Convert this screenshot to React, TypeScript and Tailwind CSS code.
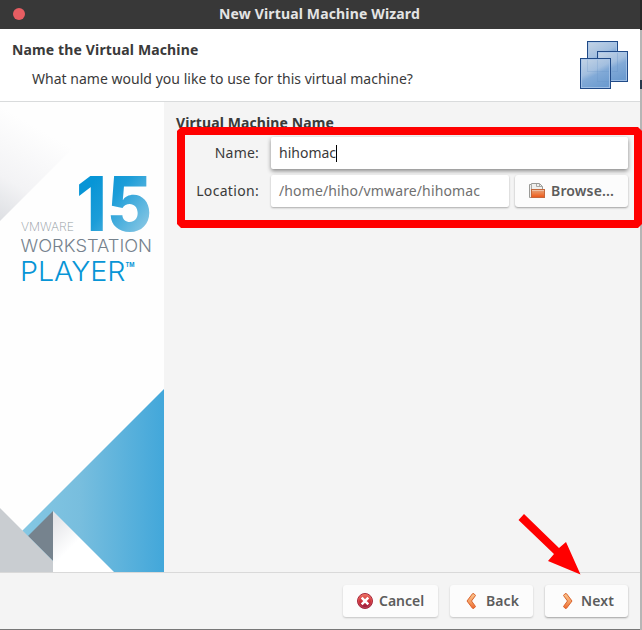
import React from 'react';

const FONT = "font-['Noto_Sans','Open_Sans',sans-serif]";

function SplashArt() {
  return (
    <svg className="block h-[470px] w-[164px]" viewBox="0 102 164 470">
      <defs>
        <linearGradient id="haze" gradientUnits="userSpaceOnUse" x1="0" y1="221" x2="50" y2="135">
          <stop offset="0" stopColor="#dddfe3" />
          <stop offset="0.4" stopColor="#f3f3f5" />
          <stop offset="1" stopColor="#fefefe" />
        </linearGradient>
        <linearGradient id="blue" gradientUnits="userSpaceOnUse" x1="24" y1="0" x2="164" y2="0">
          <stop offset="0" stopColor="#84c7e3" />
          <stop offset="0.4" stopColor="#78bede" />
          <stop offset="1" stopColor="#42a7da" />
        </linearGradient>
        <linearGradient id="fold" gradientUnits="userSpaceOnUse" x1="53" y1="520" x2="76" y2="543">
          <stop offset="0" stopColor="#e4e5e8" />
          <stop offset="1" stopColor="#ffffff" />
        </linearGradient>
        <linearGradient id="digits" gradientUnits="userSpaceOnUse" x1="90" y1="185" x2="150" y2="232">
          <stop offset="0" stopColor="#0795d6" />
          <stop offset="0.35" stopColor="#1c9dd8" />
          <stop offset="1" stopColor="#93cbe5" />
        </linearGradient>
      </defs>
      <rect x="0" y="102" width="164" height="470" fill="#fefefe" />
      <path d="M0 102H119L0 221Z" fill="url(#haze)" />
      <path d="M164 389V572H60L22 531Z" fill="url(#blue)" />
      <path d="M53 511L28 536L53 561Z" fill="#76838e" />
      <path d="M53 511V572H114Z" fill="url(#fold)" />
      <path d="M0 508L53 561V572H0Z" fill="#c9cdd1" />
      <text x="76" y="230.500" textLength="76" lengthAdjust="spacingAndGlyphs" fill="url(#digits)" fontFamily="Inter, sans-serif" fontSize="75" fontWeight="800">15</text>
      <text x="21" y="231" textLength="53" lengthAdjust="spacingAndGlyphs" fill="#929ba3" fontFamily="Inter, sans-serif" fontSize="12" fontWeight="200">VMWARE</text>
      <text x="20.500" y="252" textLength="131.500" lengthAdjust="spacingAndGlyphs" fill="#75828d" fontFamily="Inter, sans-serif" fontSize="17.5" fontWeight="300">WORKSTATION</text>
      <text x="20" y="280.500" textLength="105.500" lengthAdjust="spacingAndGlyphs" fill="#0795d6" fontFamily="Inter, sans-serif" fontSize="26.500" fontWeight="300">PLAYER</text>
      <text x="125.500" y="267" textLength="9" lengthAdjust="spacingAndGlyphs" fill="#0795d6" fontFamily="Inter, sans-serif" fontSize="6.500" fontWeight="700">TM</text>
    </svg>
  );
}

function MachinesIcon() {
  return (
    <svg className="h-[48px] w-[48px]" viewBox="0 0 48 48">
      <defs>
        <linearGradient id="pane" x1="0.1" y1="0" x2="0.6" y2="1">
          <stop offset="0" stopColor="#c3d3e5" />
          <stop offset="0.45" stopColor="#a3bfdf" />
          <stop offset="0.6" stopColor="#82aad7" />
          <stop offset="1" stopColor="#6d9cd0" />
        </linearGradient>
      </defs>
      {[[7, 0], [17, 10], [0, 17]].map(([x, y]) => (
        <g key={x}>
          <rect x={x + 0.5} y={y + 0.5} width="30" height="30" fill="url(#pane)" stroke="#204a87" />
          <rect x={x + 1.5} y={y + 1.5} width="28" height="28" fill="none" stroke="#a9c6e8" strokeOpacity="0.8" />
        </g>
      ))}
      <path d="M7.500 19V30.500H29M17.500 19V40.500H29" fill="none" stroke="#5f8fc6" strokeOpacity="0.22" />
      <path d="M32 30.500H37.500V12" fill="none" stroke="#5f8fc6" strokeOpacity="0.3" />
    </svg>
  );
}

function FolderIcon() {
  return (
    <svg className="h-4 w-4 shrink-0" viewBox="0 0 16 16">
      <defs>
        <linearGradient id="folder" x1="0" y1="0" x2="0" y2="1">
          <stop offset="0" stopColor="#e3a582" />
          <stop offset="0.5" stopColor="#ec8149" />
          <stop offset="1" stopColor="#ec5518" />
        </linearGradient>
      </defs>
      <path d="M.5 14.500V1.500H2.500V.5H10.500L13.500 3.500V7H3V14.500Z" fill="#efefed" stroke="#9a9a97" />
      <path d="M2.500 2V13M7.500 1V3.500H13.500M10.500 1V3" fill="none" stroke="#a9a9a6" />
      <rect x="2.500" y="6.500" width="13" height="8" fill="url(#folder)" stroke="#c4683c" />
      <path d="M3 7.500H15" stroke="#edc0a4" />
    </svg>
  );
}

function CancelIcon() {
  return (
    <svg className="h-4 w-4 shrink-0" viewBox="0 0 16 16">
      <defs>
        <linearGradient id="stop" x1="0" y1="0" x2="0" y2="1">
          <stop offset="0" stopColor="#ef7a68" />
          <stop offset="0.5" stopColor="#cf3038" />
          <stop offset="1" stopColor="#8f1840" />
        </linearGradient>
      </defs>
      <circle cx="8" cy="8" r="7.500" fill="url(#stop)" stroke="#a6283d" />
      <circle cx="8" cy="8" r="6.500" fill="none" stroke="#ee7770" strokeOpacity="0.4" />
      <path d="M4.700 4.700L11.300 11.300M11.300 4.700L4.700 11.300" stroke="#fff" strokeWidth="2.500" />
    </svg>
  );
}

function Chevron({ flip = false }: { flip?: boolean }) {
  return (
    <svg className={flip ? 'h-4 w-4 shrink-0 -scale-x-100' : 'h-4 w-4 shrink-0'} viewBox="0 0 16 16">
      <defs>
        <linearGradient id="chev" x1="0" y1="0" x2="0" y2="1">
          <stop offset="0" stopColor="#fbc58d" />
          <stop offset="0.6" stopColor="#f49a5e" />
          <stop offset="1" stopColor="#ee6a2f" />
        </linearGradient>
      </defs>
      <path d="M4.500 2.500L6 .7H7.500L13 8L7.500 15.300H6L4.500 13.500L8.500 8Z" fill="url(#chev)" stroke="#d9622c" strokeLinejoin="round" />
    </svg>
  );
}

const BTN = 'flex items-center rounded-[3px] bg-[#fcfcfc] font-semibold text-[#5c5c5c]';
const BTN_RAISED = 'shadow-[0_1px_2px_rgba(0,0,0,0.35)]';
const BTN_FLAT = 'shadow-[0_1px_2px_rgba(0,0,0,0.2)]';

export default function App() {
  return (
    <div className={`relative flex h-[630px] w-[642px] overflow-hidden text-[14px] leading-[20px] whitespace-nowrap text-[#3a3a3a] ${FONT}`}>
      <div className="flex w-[640px] flex-col border-b border-[#777777] bg-[#f4f4f4]">
        <header className="flex h-[29px] items-center bg-[#383838] pb-px">
          <div className="ml-[13px] h-[12px] w-[12px] rounded-full bg-[#e75d62]" />
          <h1 className="ml-[194px] font-bold tracking-[0.15px] text-[#e4e4e4]">New Virtual Machine Wizard</h1>
        </header>

        <section className="flex h-[73px] justify-between border-b border-[#d9dbdc] bg-white pr-[12px] pl-[12px]">
          <div className="pt-[11px]">
            <h2 className="font-bold tracking-[0.14px]">Name the Virtual Machine</h2>
            <p className="mt-[9px] ml-[20px] tracking-[0.02px]">What name would you like to use for this virtual machine?</p>
          </div>
          <div className="pt-[12px]"><MachinesIcon /></div>
        </section>

        <main className="flex h-[470px]">
          <SplashArt />
          <div className="flex-1 pt-[11px] pr-[12px] pl-[12px]">
            <h3 className="font-bold tracking-[0.1px]">Virtual Machine Name</h3>
            <div className="mt-[4px] flex h-[32px] items-center">
              <label className="w-[83px] text-right tracking-[0.2px]">Name:</label>
              <div className="ml-[12px] flex h-[32px] flex-1 items-center rounded-[2px] bg-white pl-[8px] shadow-[0_2px_4px_rgba(0,0,0,0.45)]">
                hihomac<span className="h-[17px] w-px bg-black" />
              </div>
            </div>
            <div className="mt-[6px] flex h-[32px] items-center">
              <label className="w-[83px] text-right tracking-[0.32px]">Location:</label>
              <div className="ml-[12px] flex h-[32px] w-[238px] items-center rounded-[2px] bg-white pl-[8px] tracking-[0.13px] text-[#707070] shadow-[0_1px_2px_rgba(0,0,0,0.3)]">
                /home/hiho/vmware/hihomac
              </div>
              <button className={`${BTN} ${BTN_RAISED} ml-[6px] h-[32px] w-[113px] pl-[14px]`}>
                <FolderIcon /><span className="ml-[6px] tracking-[0.15px]">Browse...</span>
              </button>
            </div>
          </div>
        </main>

        <footer className="flex flex-1 items-start justify-end border-t border-[#d9d9d9] pt-[12px] pr-[12px]">
          <button className={`${BTN} ${BTN_FLAT} h-[32px] w-[95px] pl-[14px]`}>
            <CancelIcon /><span className="ml-[6px]">Cancel</span>
          </button>
          <button className={`${BTN} ${BTN_FLAT} ml-[12px] h-[32px] w-[83px] pl-[14px]`}>
            <Chevron flip /><span className="ml-[6px] tracking-[0.1px]">Back</span>
          </button>
          <button className={`${BTN} ${BTN_RAISED} ml-[12px] h-[32px] w-[83px] pl-[14px]`}>
            <Chevron /><span className="ml-[6px] tracking-[0.1px]">Next</span>
          </button>
        </footer>
      </div>
      <div className="flex w-[2px] flex-col bg-[#b5b5b5]">
        <div className="h-[30px] bg-[#292929]" />
        <div className="mt-[50px] h-[9px] bg-[#26394c]" />
      </div>

      <svg className="pointer-events-none absolute inset-0 h-full w-full" viewBox="0 0 642 630">
        <path d="M181 131H638V224H181Z" fill="none" stroke="#ff0000" strokeWidth="8" strokeLinejoin="bevel" />
        <path d="M524 514L559 548L566 542L580.500 574.500L548 561L554 554L518.500 520Z" fill="#ff0000" />
      </svg>
    </div>
  );
}
